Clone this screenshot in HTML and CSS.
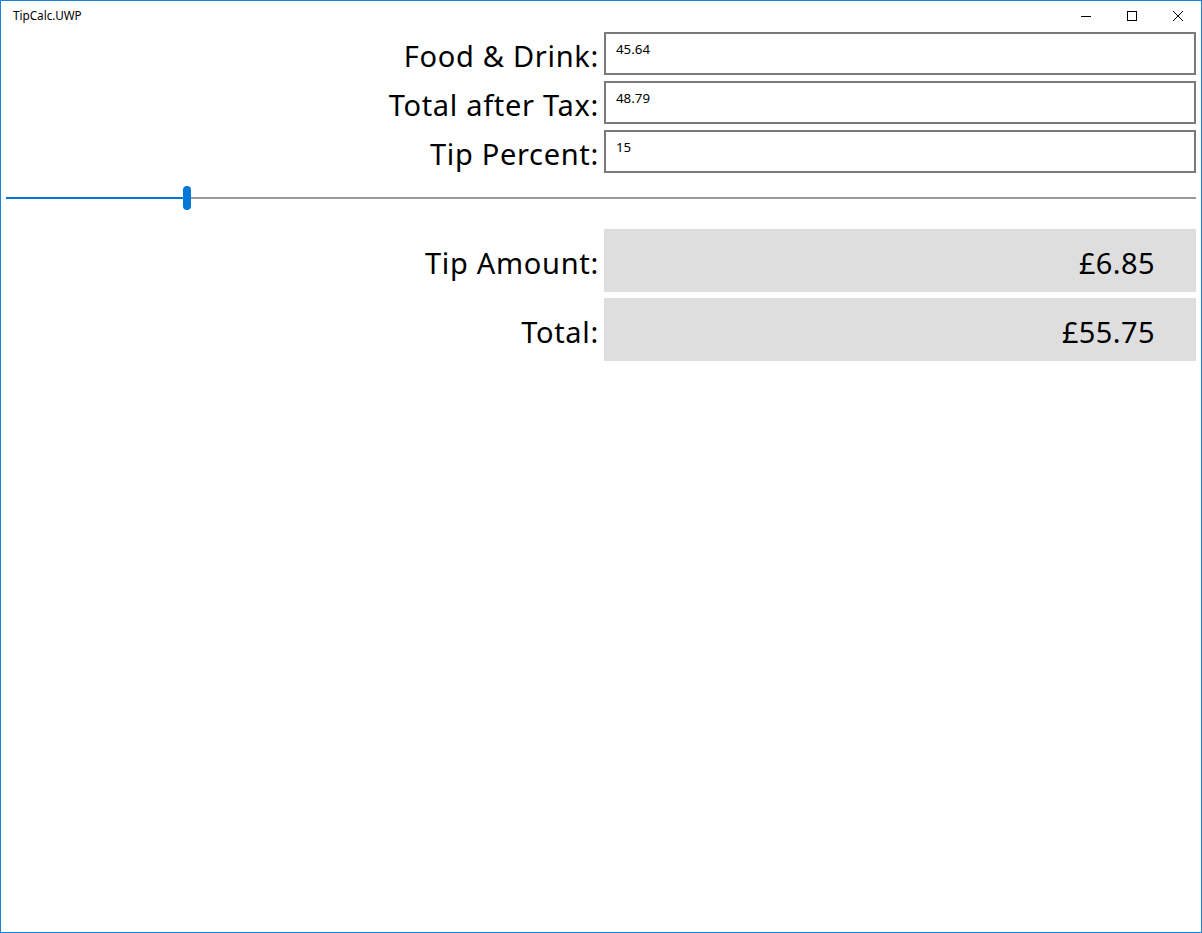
FILE: index.html
```html
<!DOCTYPE html>
<html>
<head>
<meta charset="utf-8">
<title>TipCalc.UWP</title>
<link rel="stylesheet" href="styles.css">
</head>
<body>
<div class="window">
  <div class="titlebar">
    <div class="title">TipCalc.UWP</div>
    <div class="caption-buttons">
      <div class="cbtn"><svg width="10" height="10" viewBox="0 0 10 10"><path d="M0 5.5H10" stroke="#000" stroke-width="1"/></svg></div>
      <div class="cbtn"><svg width="10" height="10" viewBox="0 0 10 10"><rect x="0.5" y="0.5" width="9" height="9" fill="none" stroke="#000" stroke-width="1"/></svg></div>
      <div class="cbtn"><svg width="10" height="10" viewBox="0 0 10 10"><path d="M0 0L10 10M10 0L0 10" stroke="#000" stroke-width="1"/></svg></div>
    </div>
  </div>
  <div class="content">
    <div class="form">
      <div class="label">Food &amp; Drink:</div>
      <div class="input">45.64</div>
      <div class="label">Total after Tax:</div>
      <div class="input">48.79</div>
      <div class="label">Tip Percent:</div>
      <div class="input">15</div>
    </div>
    <div class="slider">
      <div class="track-fill"></div>
      <div class="thumb"></div>
      <div class="track-rest"></div>
    </div>
    <div class="results">
      <div class="label">Tip Amount:</div>
      <div class="output">£6.85</div>
      <div class="label">Total:</div>
      <div class="output">£55.75</div>
    </div>
  </div>
</div>
</body>
</html>
```
FILE: styles.css
```css
html, body {
  margin: 0;
  padding: 0;
  background: #fff;
}
.window {
  width: 1202px;
  height: 933px;
  box-sizing: border-box;
  border: 1px solid #1883d7;
  font-family: "Noto Sans", "Open Sans", sans-serif;
  color: #000;
  overflow: hidden;
}
.titlebar {
  height: 31px;
  display: flex;
  align-items: center;
  justify-content: space-between;
}
.title {
  font-size: 11.7px;
  padding-left: 12px;
  padding-bottom: 3px;
}
.caption-buttons {
  display: flex;
  align-self: stretch;
}
.cbtn {
  width: 46px;
  display: flex;
  align-items: center;
  justify-content: center;
  padding-bottom: 1px;
}
.content {
  padding: 0 5px;
}
.form, .results {
  display: grid;
  grid-template-columns: 1fr 1fr;
  column-gap: 6px;
  row-gap: 6px;
}
.label {
  font-size: 29px;
  text-align: right;
  display: flex;
  align-items: center;
  justify-content: flex-end;
  white-space: nowrap;
  letter-spacing: 0.7px;
  padding-top: 3px;
  margin-right: -1px;
}
.input {
  height: 43px;
  box-sizing: border-box;
  border: 2px solid #7a7a7a;
  font-size: 13.3px;
  padding: 6px 10px;
  line-height: 18px;
}
.slider {
  display: flex;
  align-items: center;
  height: 24px;
  margin-top: 13px;
}
.track-fill {
  width: 177px;
  height: 2px;
  background: #0078d7;
}
.thumb {
  width: 8px;
  height: 24px;
  border-radius: 4px;
  background: #0078d7;
}
.track-rest {
  flex: 1;
  height: 2px;
  background: #999;
}
.results {
  margin-top: 19px;
}
.output {
  height: 63px;
  background: #dedede;
  font-size: 29px;
  display: flex;
  align-items: center;
  justify-content: flex-end;
  padding-right: 41px;
  padding-top: 3px;
  box-sizing: border-box;
  letter-spacing: 0.4px;
}
```
